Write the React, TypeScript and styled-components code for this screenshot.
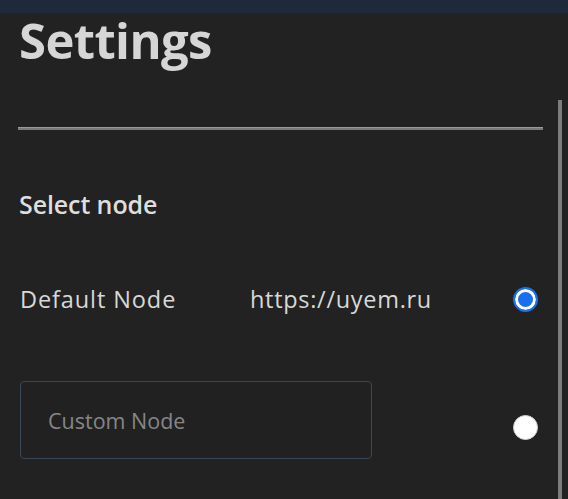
import React from "react";
import styled, { createGlobalStyle } from "styled-components";

const Global = createGlobalStyle`
  html, body { margin: 0; padding: 0; background: #222222; }
  body { font-family: "Open Sans", "Noto Sans", sans-serif; color: #dcdcdc; overflow: hidden; }
`;

const Screen = styled.div`
  position: relative;
  width: 568px;
  height: 499px;
  background: #222222;
  overflow: hidden;
`;

const TopBar = styled.div`
  height: 13px;
  background: #1e2a3b;
`;

const Content = styled.div`
  display: flex;
  flex-direction: column;
  padding: 0 25px 0 18px;
`;

const Title = styled.h1`
  margin: 0;
  padding-left: 1px;
  font-size: 49px;
  line-height: 54px;
  font-weight: 700;
  color: #d6d6d6;
  letter-spacing: -0.6px;
`;

const Divider = styled.hr`
  margin: 60px 0 0 0;
  border: none;
  height: 3px;
  background: #7a7a7a;
  border-top: 1px solid #9a9a9a;
  box-sizing: border-box;
`;

const SectionTitle = styled.h2`
  margin: 59px 0 0 1px;
  font-size: 25px;
  line-height: 30px;
  font-weight: 600;
  color: #dedede;
  letter-spacing: -0.1px;
`;

const Row = styled.div<{ $top: number }>`
  display: grid;
  grid-template-columns: 232px 1fr auto;
  align-items: center;
  margin-top: ${(p) => p.$top}px;
  padding-right: 5px;
`;

const Label = styled.span`
  padding-left: 2px;
  font-size: 23.5px;
  letter-spacing: 0.9px;
  color: #d8d8d8;
`;

const Url = styled.span`
  font-size: 23.5px;
  letter-spacing: 0.7px;
  color: #d8d8d8;
`;

const Radio = styled.span<{ $checked?: boolean }>`
  display: block;
  box-sizing: border-box;
  width: 25px;
  height: 25px;
  border-radius: 50%;
  background: ${(p) => (p.$checked ? "#1a6ff0" : "#ffffff")};
  border: ${(p) => (p.$checked ? "2px solid #1a6ff0" : "1px solid #cfcfcf")};
  box-shadow: ${(p) => (p.$checked ? "inset 0 0 0 3px #ffffff" : "none")};
`;

const CustomRow = styled.div`
  display: flex;
  align-items: center;
  justify-content: space-between;
  margin-top: 66px;
  padding-left: 2px;
  padding-right: 5px;
`;

const Input = styled.input`
  box-sizing: border-box;
  width: 352px;
  height: 78px;
  padding: 0 0 0 27px;
  background: #212121;
  border: 1px solid #3b4658;
  border-radius: 4px;
  font-family: "Open Sans", "Noto Sans", sans-serif;
  font-size: 21.5px;
  color: #dcdcdc;
  outline: none;
  &::placeholder { color: #868686; }
`;

const RadioSlot = styled.div`
  padding-top: 14px;
`;

const ScrollThumb = styled.div`
  position: absolute;
  right: 6px;
  top: 100px;
  bottom: 0;
  width: 4px;
  background: #7c7c7c;
`;

export default function App() {
  return (
    <Screen>
      <Global />
      <TopBar />
      <Content>
        <Title>Settings</Title>
        <Divider />
        <SectionTitle>Select node</SectionTitle>
        <Row $top={64}>
          <Label>Default Node</Label>
          <Url>https://uyem.ru</Url>
          <Radio $checked />
        </Row>
        <CustomRow>
          <Input placeholder="Custom Node" />
          <RadioSlot>
            <Radio />
          </RadioSlot>
        </CustomRow>
      </Content>
      <ScrollThumb />
    </Screen>
  );
}
